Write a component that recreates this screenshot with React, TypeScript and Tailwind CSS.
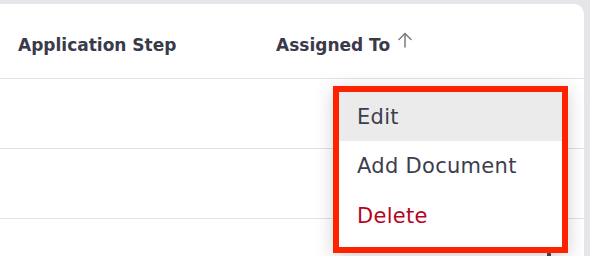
import React from "react";

export default function App() {
  const font = { fontFamily: '"DejaVu Sans", "Noto Sans", sans-serif' };
  return (
    <div className="w-[590px] h-[256px] bg-[#e5e5ea] overflow-hidden relative" style={font}>
      <div className="mt-1 w-[584px] h-[260px] bg-white rounded-tr-[10px] flex flex-col">
        <div className="h-[75px] pt-[9px] flex items-center border-b border-[#e2e2e2] text-[#3a3a4a] text-[17px] font-bold">
          <div className="w-[276px] pl-[18px]">Application Step</div>
          <div className="flex items-center gap-[7px]">
            <span>Assigned To</span>
            <svg width="16" height="16" viewBox="0 0 16 16" fill="none" stroke="#7a7a80" strokeWidth="1.5" strokeLinecap="round" strokeLinejoin="round" className="-mt-[12px]">
              <path d="M8 15V1.5" />
              <path d="M2 7.5L8 1.5L14 7.5" />
            </svg>
          </div>
        </div>
        <div className="h-[70px] border-b border-[#e2e2e2]" />
        <div className="h-[70px] border-b border-[#e2e2e2]" />
        <div className="flex-1" />
      </div>
      <div className="absolute left-[547px] top-[252px] w-[4px] h-[8px] rounded-sm bg-[#4a4560]" />
      <div className="absolute left-[333px] top-[86px] w-[235px] h-[167px] border-[6px] border-[#ff2200] bg-white shadow-[0_4px_18px_rgba(0,0,0,0.18)]">
        <div className="flex flex-col text-[21px] tracking-[0.3px] text-[#3d3d4f]">
          <div className="h-[49px] pt-[3px] flex items-center pl-[18px] bg-[#ebebeb]">Edit</div>
          <div className="h-[48px] pt-[3px] flex items-center pl-[18px]">Add Document</div>
          <div className="h-[50px] pt-[5px] flex items-center pl-[18px] text-[#b5051e]">Delete</div>
        </div>
      </div>
    </div>
  );
}
